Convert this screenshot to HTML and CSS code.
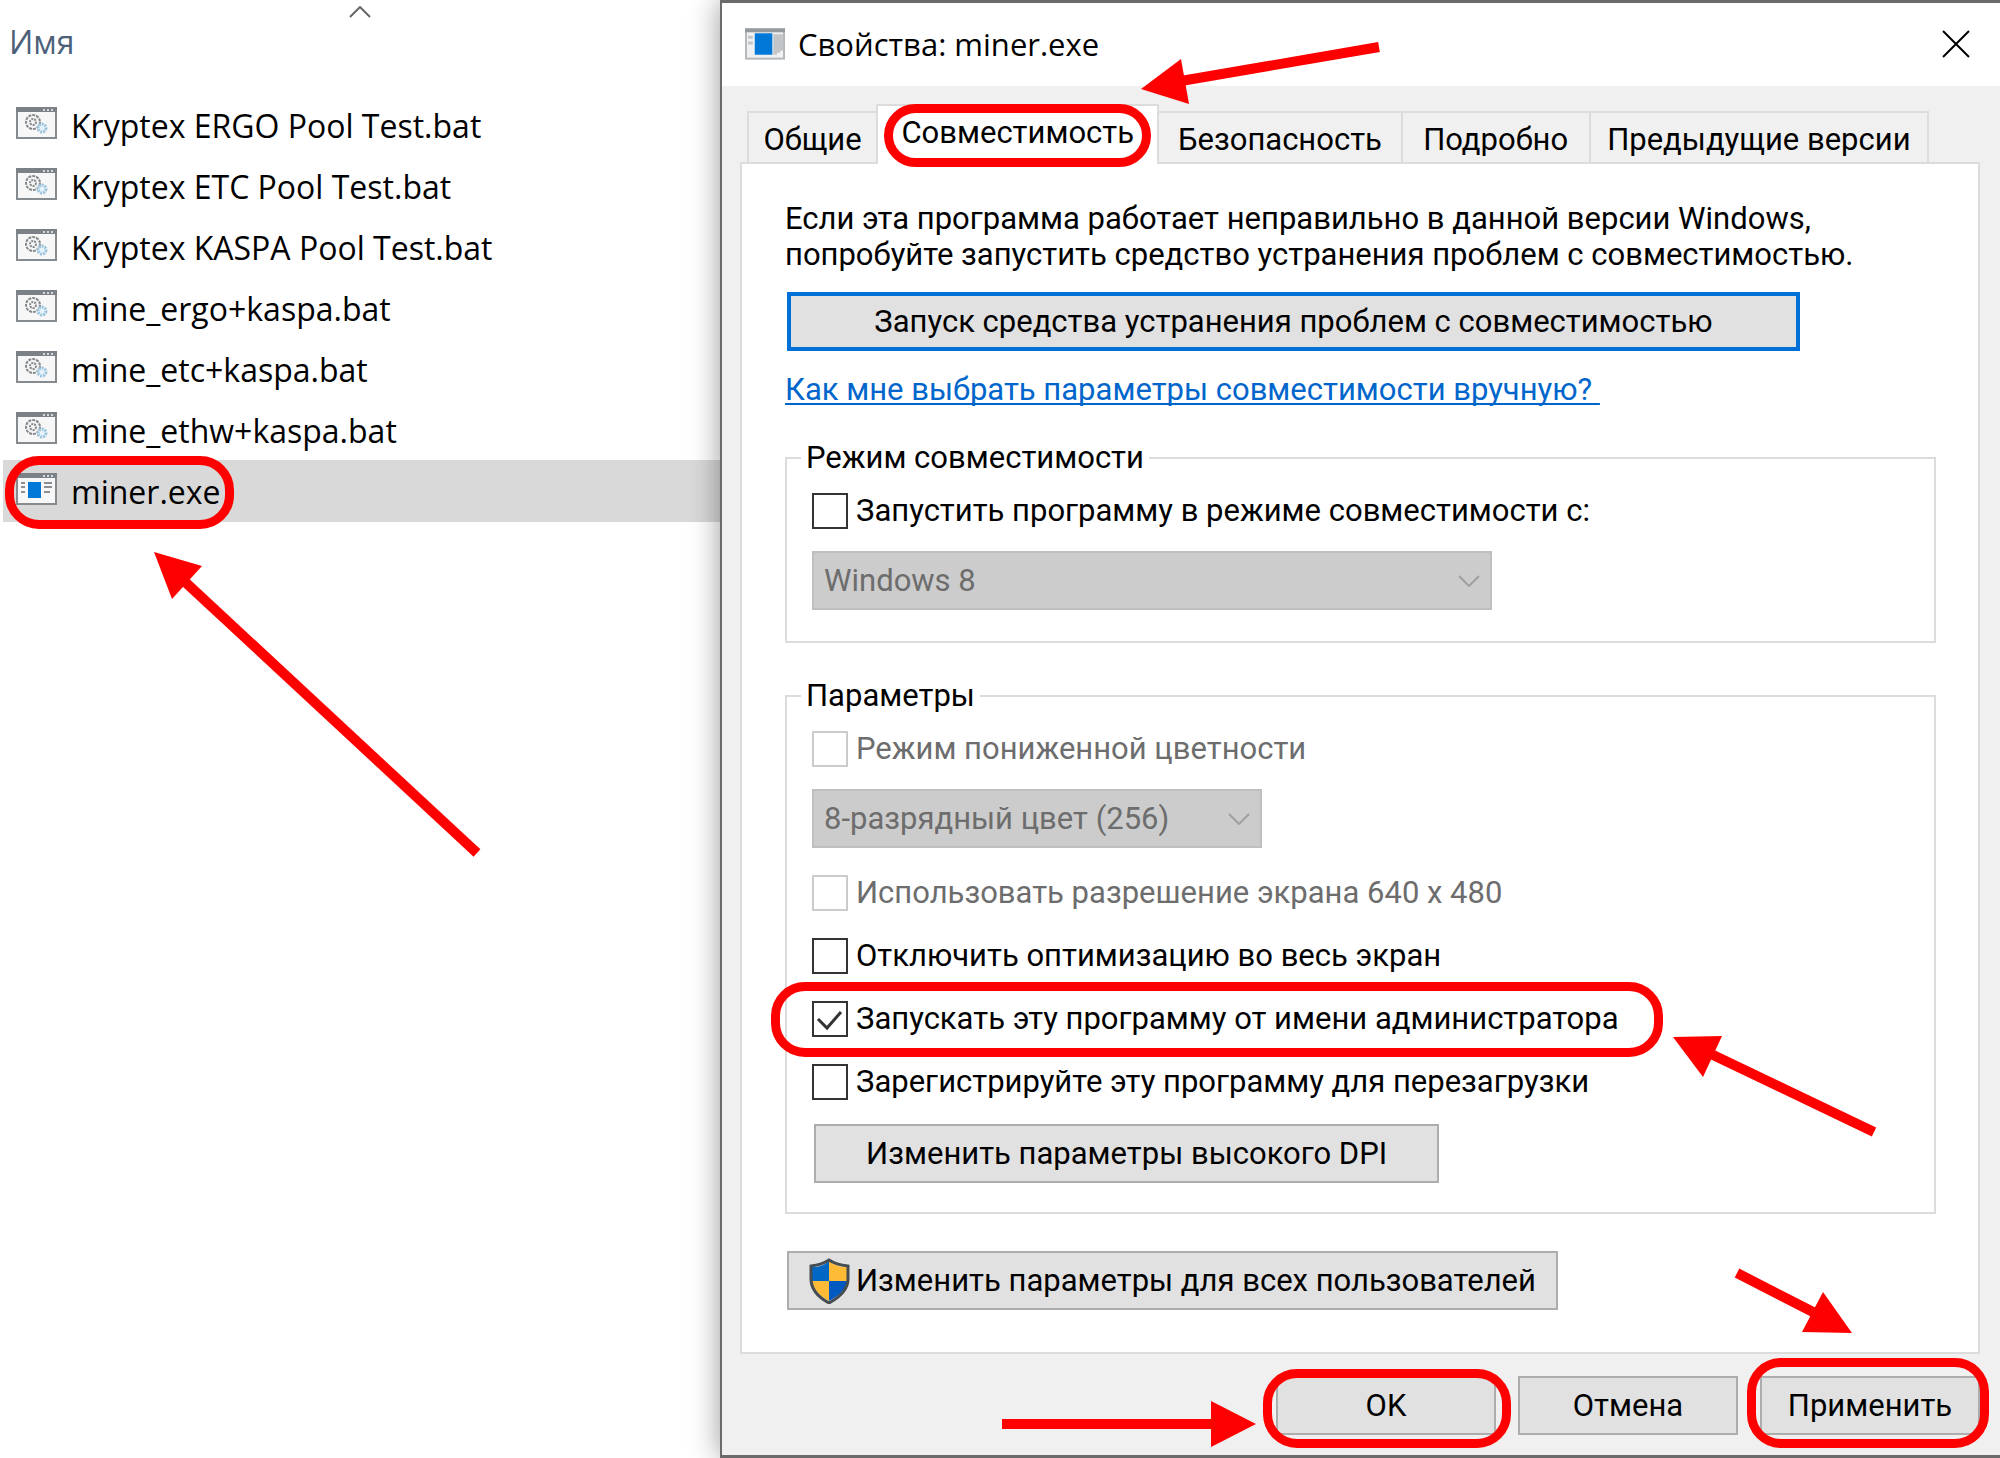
FILE: index.html
```html
<!DOCTYPE html>
<html lang="ru">
<head>
    <meta charset="UTF-8">
    <title>Свойства: miner.exe</title>
    <link rel="stylesheet" href="styles.css">
</head>
<body>
<!-- общие иконки -->
<svg class="symbols" aria-hidden="true">
    <symbol id="icon-bat" viewBox="0 0 41 32">
        <rect x="1" y="1" width="39" height="30" fill="#f7f7f7" stroke="#868b90" stroke-width="2"/>
        <rect x="0" y="0" width="41" height="5" fill="#7b8187"/>
        <path d="M27 3h2M31 3h2M35 3h2" stroke="#d5d8da" stroke-width="2"/>
        <circle cx="17" cy="15" r="7" fill="#f4f4f4" stroke="#85898c" stroke-width="2" stroke-dasharray="3 1"/>
        <circle cx="17" cy="15" r="3" fill="none" stroke="#85898c" stroke-width="2" stroke-dasharray="2 1"/>
        <circle cx="26" cy="21" r="4" fill="#e6f3fb" stroke="#9cc3dc" stroke-width="3" stroke-dasharray="2 1"/>
    </symbol>
    <symbol id="icon-exe" viewBox="0 0 41 32">
        <rect x="1" y="1" width="39" height="30" fill="#f7f7f7" stroke="#868b90" stroke-width="2"/>
        <rect x="0" y="0" width="41" height="5" fill="#7b8187"/>
        <path d="M27 3h2M31 3h2M35 3h2" stroke="#d5d8da" stroke-width="2"/>
        <rect x="12" y="9" width="13" height="16" fill="#0078d7"/>
        <path d="M5 10h4M5 14h4M5 19h4M28 10h8M28 14h8M28 19h6" stroke="#8b8f92" stroke-width="2"/>
    </symbol>
    <symbol id="icon-window" viewBox="0 0 41 32">
        <rect x="1" y="1" width="39" height="30" fill="#f0f1f2" stroke="#b4b7ba" stroke-width="2"/>
        <rect x="0" y="0" width="41" height="4" fill="#96999c"/>
        <rect x="10" y="5" width="18" height="22" fill="#0078d7"/>
        <path d="M3 9h5M3 15h5" stroke="#c3c6c9" stroke-width="3"/>
        <path d="M29 6h10v17h-3v2h-3v2h-4z" fill="#c3c6c9"/>
    </symbol>
</svg>

<div class="screen">
    <!-- список файлов -->
    <div class="files">
        <svg class="sort-mark" viewBox="0 0 22 12"><path d="M1 11L11 1l10 10" fill="none" stroke="#666" stroke-width="2"/></svg>
        <div class="files-title">Имя</div>
        <ul class="file-list">
            <li class="file"><svg class="file-icon"><use href="#icon-bat"/></svg>Kryptex ERGO Pool Test.bat</li>
            <li class="file"><svg class="file-icon"><use href="#icon-bat"/></svg>Kryptex ETC Pool Test.bat</li>
            <li class="file"><svg class="file-icon"><use href="#icon-bat"/></svg>Kryptex KASPA Pool Test.bat</li>
            <li class="file"><svg class="file-icon"><use href="#icon-bat"/></svg>mine_ergo+kaspa.bat</li>
            <li class="file"><svg class="file-icon"><use href="#icon-bat"/></svg>mine_etc+kaspa.bat</li>
            <li class="file"><svg class="file-icon"><use href="#icon-bat"/></svg>mine_ethw+kaspa.bat</li>
            <li class="file selected">
                <svg class="file-icon"><use href="#icon-exe"/></svg>miner.exe
                <span class="ring ring-file"></span>
                <svg class="arrow arrow-file" viewBox="0 0 330 310">
                    <path d="M30 28L324 301" stroke="#f00" stroke-width="10"/>
                    <path d="M1 0l48 14-30 33z" fill="#f00"/>
                </svg>
            </li>
        </ul>
    </div>

    <!-- окно свойств -->
    <div class="window">
        <div class="window-title">
            <svg class="window-icon"><use href="#icon-window"/></svg>
            <h1>Свойства: miner.exe</h1>
            <button type="button" class="close" aria-label="Закрыть">
                <svg viewBox="0 0 28 28"><path d="M1 1l26 26M27 1L1 27" stroke="#000" stroke-width="2"/></svg>
            </button>
        </div>

        <div class="window-body">
            <div class="tabs" role="tablist">
                <button type="button" role="tab" class="tab">Общие</button>
                <button type="button" role="tab" class="tab active" aria-selected="true">Совместимость
                    <span class="ring ring-tab"></span>
                    <svg class="arrow arrow-tab" viewBox="0 0 240 66">
                        <path d="M40 42L238 8" stroke="#f00" stroke-width="10"/>
                        <path d="M0 50l40-30 8 45z" fill="#f00"/>
                    </svg>
                </button>
                <button type="button" role="tab" class="tab">Безопасность</button>
                <button type="button" role="tab" class="tab">Подробно</button>
                <button type="button" role="tab" class="tab">Предыдущие версии</button>
            </div>

            <div class="panel" role="tabpanel">
                <p class="intro">Если эта программа работает неправильно в данной версии Windows,<br>попробуйте запустить средство устранения проблем с совместимостью.</p>
                <button type="button" class="btn btn-run">Запуск средства устранения проблем с совместимостью</button>
                <a href="#" class="help">Как мне выбрать параметры совместимости вручную?&nbsp;</a>

                <fieldset class="group group-mode">
                    <legend>Режим совместимости</legend>
                    <label class="check"><input type="checkbox">Запустить программу в режиме совместимости с:</label>
                    <div class="combo combo-os">
                        <select disabled aria-label="Версия Windows"><option>Windows 8</option></select>
                        <svg viewBox="0 0 22 12"><path d="M1 1l10 10L21 1" fill="none" stroke="#a0a0a0" stroke-width="2"/></svg>
                    </div>
                </fieldset>

                <fieldset class="group group-options">
                    <legend>Параметры</legend>
                    <label class="check disabled"><input type="checkbox" disabled>Режим пониженной цветности</label>
                    <div class="combo combo-color">
                        <select disabled aria-label="Количество цветов"><option>8-разрядный цвет (256)</option></select>
                        <svg viewBox="0 0 22 12"><path d="M1 1l10 10L21 1" fill="none" stroke="#a0a0a0" stroke-width="2"/></svg>
                    </div>
                    <div class="check-list">
                        <label class="check disabled"><input type="checkbox" disabled>Использовать разрешение экрана 640 x 480</label>
                        <label class="check"><input type="checkbox">Отключить оптимизацию во весь экран</label>
                        <label class="check"><input type="checkbox" checked>Запускать эту программу от имени администратора
                            <span class="ring ring-admin"></span>
                            <svg class="arrow arrow-admin" viewBox="0 0 206 102">
                                <path d="M38 18L201 96" stroke="#f00" stroke-width="10"/>
                                <path d="M0 1l49-1-19 41z" fill="#f00"/>
                            </svg>
                        </label>
                        <label class="check"><input type="checkbox">Зарегистрируйте эту программу для перезагрузки</label>
                    </div>
                    <button type="button" class="btn btn-dpi">Изменить параметры высокого DPI</button>
                </fieldset>

                <button type="button" class="btn btn-users">
                    <svg class="shield" viewBox="0 0 41 46">
                        <path d="M20 3v20H3V9c8 0 12-2 17-6z" fill="#0067c5"/>
                        <path d="M20 3c6 4 10 6 18 6v14H20z" fill="#fdbb36"/>
                        <path d="M3 23h17v20C10 37 4 31 3 23z" fill="#fdbb36"/>
                        <path d="M20 23h18c-1 8-7 14-18 20z" fill="#0059c1"/>
                        <path d="M20 2c6 4 10 5 19 6v13c0 11-8 18-19 24C9 39 2 32 2 21V8c8-1 12-2 18-6z" fill="none" stroke="#454c52" stroke-width="3"/>
                    </svg>Изменить параметры для всех пользователей
                </button>
            </div>

            <div class="window-buttons">
                <button type="button" class="btn">OK
                    <span class="ring ring-ok"></span>
                    <svg class="arrow arrow-ok" viewBox="0 0 254 46">
                        <path d="M0 23h210" stroke="#f00" stroke-width="10"/>
                        <path d="M209 0l45 23-45 23z" fill="#f00"/>
                    </svg>
                </button>
                <button type="button" class="btn">Отмена</button>
                <button type="button" class="btn">Применить
                    <span class="ring ring-apply"></span>
                    <svg class="arrow arrow-apply" viewBox="0 0 118 66">
                        <path d="M3 6l78 40" stroke="#f00" stroke-width="10"/>
                        <path d="M118 66L89 25 68 65z" fill="#f00"/>
                    </svg>
                </button>
            </div>
        </div>
    </div>
</div>
</body>
</html>
```
FILE: styles.css
```css
* {
    box-sizing: border-box;
}
body {
    margin: 0;
    background: #fff;
    color: #000;
    font-family: Roboto, "Liberation Sans", sans-serif;
    font-size: 31px;
    line-height: 36px;
}
button, select {
    font: inherit;
    color: inherit;
}
.symbols {
    display: none;
}
.screen {
    display: flex;
    min-height: 100vh;
    overflow: hidden;
}

/* список файлов */
.files {
    width: 36%;
    padding-top: 6px;
    font-family: "Open Sans", "Noto Sans", sans-serif;
    font-size: 32px;
}
.sort-mark {
    display: block;
    width: 22px;
    height: 12px;
    margin: 0 auto;
}
.files-title {
    margin: 4px 0 0 9px;
    line-height: 40px;
    color: #4c607a;
}
.file-list {
    list-style: none;
    margin: 32px 0 0 3px;
    padding: 0;
}
.file {
    position: relative;
    display: flex;
    align-items: center;
    gap: 14px;
    height: 61px;
    padding: 2px 0 0 13px;
}
.file.selected {
    height: 62px;
    background: #d9d9d9;
}
.file-icon {
    width: 41px;
    height: 32px;
    margin-bottom: 6px;
}

/* окно свойств */
.window {
    position: relative;
    flex: 1;
    display: flex;
    flex-direction: column;
    border: solid #6b6b6b;
    border-width: 3px 0 3px 2px;
    background: #f0f0f0;
    box-shadow: 0 0 28px rgba(0, 0, 0, 0.4);
}
.window-title {
    display: flex;
    align-items: center;
    height: 83px;
    padding: 0 30px 2px 23px;
    background: #fff;
}
.window-title h1 {
    flex: 1;
    margin: 0 0 0 13px;
    font: 31px/40px "Open Sans", "Noto Sans", sans-serif;
}
.window-icon {
    width: 40px;
    height: 32px;
}
.close {
    width: 28px;
    height: 28px;
    padding: 0;
    border: 0;
    background: none;
}
.close svg {
    display: block;
}
.window-body {
    flex: 1;
    display: flex;
    flex-direction: column;
    padding: 18px 20px 20px 18px;
}
.tabs {
    display: grid;
    grid-template-columns: 131fr 281fr 243fr 188fr 338fr;
    align-items: end;
    margin: 0 51px 0 7px;
}
.tab {
    position: relative;
    height: 51px;
    padding: 5px 0 0;
    border: 2px solid #dcdcdc;
    border-width: 2px 2px 0 0;
    background: #f0f0f0;
    white-space: nowrap;
}
.tab:first-child {
    border-left-width: 2px;
}
.tab.active {
    height: 60px;
    margin: 0 0 -2px -2px;
    padding: 0 0 4px;
    border-left-width: 2px;
    background: #fff;
    z-index: 1;
}
.panel {
    flex: 1;
    padding: 37px 42px 42px 43px;
    border: 2px solid #dcdcdc;
    background: #fff;
}
.intro {
    margin: 0;
}
.btn {
    position: relative;
    height: 59px;
    padding: 0;
    border: 2px solid #adadad;
    background: #e1e1e1;
    white-space: nowrap;
}
.btn-run {
    display: block;
    width: 88%;
    margin: 19px 0 21px 2px;
    border: 4px solid #0070d8;
}
.help {
    color: #0066cc;
    text-underline-offset: 3px;
    text-decoration-thickness: 2px;
    text-decoration-skip-ink: none;
}
.group {
    margin: 0;
    padding: 17px 25px 31px;
    border: 2px solid #dcdcdc;
}
.group legend {
    margin-left: -11px;
    padding: 0 5px;
}
.group-mode {
    margin-top: 32px;
}
.group-options {
    margin-top: 35px;
    padding-bottom: 29px;
}
.check {
    position: relative;
    display: flex;
    align-items: center;
    gap: 8px;
    width: max-content;
}
.check.disabled {
    color: #6d6d6d;
}
.check input {
    appearance: none;
    width: 36px;
    height: 36px;
    margin: 0;
    border: 2px solid #333;
    background: #fff;
}
.check input:disabled {
    border-color: #ccc;
}
.check input:checked {
    background: #fff url("data:image/svg+xml,%3Csvg xmlns='http://www.w3.org/2000/svg' viewBox='0 0 32 32'%3E%3Cpath d='M4 16l9 9L27 9' fill='none' stroke='%23333' stroke-width='3'/%3E%3C/svg%3E") center / 32px 32px no-repeat;
}
.combo {
    position: relative;
    margin-top: 22px;
}
.combo select {
    appearance: none;
    display: block;
    width: 100%;
    height: 59px;
    padding: 0 10px;
    border: 2px solid #bfbfbf;
    border-radius: 0;
    background: #ccc;
    color: #6d6d6d;
    opacity: 1;
}
.combo svg {
    position: absolute;
    right: 12px;
    top: 24px;
    width: 22px;
    height: 12px;
}
.combo-os {
    width: 62%;
}
.combo-color {
    width: 41%;
}
.check-list {
    display: grid;
    gap: 27px;
    margin: 27px 0 24px;
}
.btn-dpi {
    display: block;
    width: 57%;
    margin-left: 2px;
}
.btn-users {
    display: flex;
    align-items: center;
    gap: 6px;
    margin: 37px 0 0 2px;
    padding: 0 20px;
}
.shield {
    width: 41px;
    height: 46px;
}
.window-buttons {
    display: flex;
    justify-content: flex-end;
    gap: 22px;
    margin-top: 22px;
}
.window-buttons .btn {
    width: 220px;
}

/* красные пометки */
.ring {
    position: absolute;
    border: 9px solid #f00;
    border-radius: 34px;
    z-index: 2;
}
.arrow {
    position: absolute;
    overflow: visible;
    z-index: 2;
}
.ring-file {
    left: 2px;
    top: -4px;
    width: 229px;
    height: 73px;
}
.arrow-file {
    left: 150px;
    top: 92px;
    width: 330px;
    height: 310px;
}
.ring-tab {
    left: 6px;
    right: 6px;
    top: -2px;
    height: 63px;
}
.arrow-tab {
    left: 263px;
    top: -67px;
    width: 240px;
    height: 66px;
}
.ring-admin {
    left: -41px;
    top: -19px;
    width: 892px;
    height: 75px;
}
.arrow-admin {
    left: 861px;
    top: 35px;
    width: 206px;
    height: 102px;
}
.ring-ok {
    inset: -9px -17px -15px -15px;
}
.arrow-ok {
    right: 238px;
    top: 23px;
    width: 254px;
    height: 46px;
}
.ring-apply {
    inset: -20px -11px -15px -15px;
}
.arrow-apply {
    right: 126px;
    top: -111px;
    width: 118px;
    height: 66px;
}
```
